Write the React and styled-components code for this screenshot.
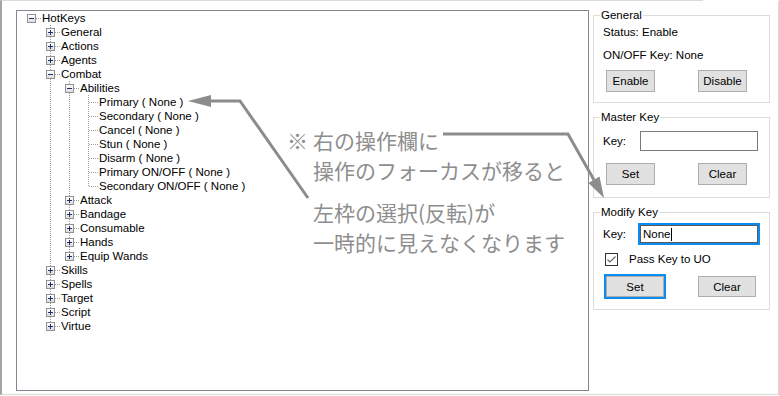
import React from 'react';
import styled, { createGlobalStyle } from 'styled-components';

const GlobalStyle = createGlobalStyle`
  html, body {
    margin: 0;
    padding: 0;
    background: #fff;
  }
  body {
    font-family: "Liberation Sans", Arial, sans-serif;
    font-size: 11.5px;
    color: #000;
  }
`;

const INDENT = 19;
const ROW = 14;
const DOT = 'repeating-linear-gradient(to bottom, #a0a0a0 0 1px, transparent 1px 2px)';
const HDOT = 'repeating-linear-gradient(to right, #a0a0a0 0 1px, transparent 1px 2px)';

const tree = [
  {
    label: 'HotKeys', open: true, children: [
      { label: 'General', closed: true },
      { label: 'Actions', closed: true },
      { label: 'Agents', closed: true },
      {
        label: 'Combat', open: true, children: [
          {
            label: 'Abilities', open: true, children: [
              { label: 'Primary ( None )' },
              { label: 'Secondary ( None )' },
              { label: 'Cancel ( None )' },
              { label: 'Stun ( None )' },
              { label: 'Disarm ( None )' },
              { label: 'Primary ON/OFF ( None )' },
              { label: 'Secondary ON/OFF ( None )' },
            ]
          },
          { label: 'Attack', closed: true },
          { label: 'Bandage', closed: true },
          { label: 'Consumable', closed: true },
          { label: 'Hands', closed: true },
          { label: 'Equip Wands', closed: true },
        ]
      },
      { label: 'Skills', closed: true },
      { label: 'Spells', closed: true },
      { label: 'Target', closed: true },
      { label: 'Script', closed: true },
      { label: 'Virtue', closed: true },
    ]
  }
];

const flatten = (nodes, depth = 0, guides = [], out = []) => {
  nodes.forEach((n, i) => {
    const isLast = i === nodes.length - 1;
    const isRootFirst = depth === 0 && i === 0;
    out.push({
      label: n.label,
      depth,
      guides,
      up: !isRootFirst,
      down: !isLast,
      expander: n.open ? 'minus' : n.closed ? 'plus' : null,
    });
    if (n.open && n.children) flatten(n.children, depth + 1, [...guides, !isLast], out);
  });
  return out;
};

const Frame = styled.div`
  position: relative;
  box-sizing: border-box;
  width: 779px;
  height: 395px;
  border-left: 2px solid #a3a3a3;
  border-top: 1px solid #dadada;
  border-right: 1px solid #dadada;
  border-bottom: 1px solid #dadada;
  padding: 9px 0 0 14px;
  display: flex;
  align-items: flex-start;

  &::before {
    content: '';
    position: absolute;
    top: -1px;
    left: 701px;
    width: 76px;
    height: 1px;
    background: #fff;
  }
`;

const TreeBox = styled.div`
  box-sizing: border-box;
  width: 573px;
  height: 381px;
  border: 1px solid #828790;
  background: #fff;
  padding-left: 5px;
`;

const Row = styled.div`
  display: flex;
  height: ${ROW}px;
  align-items: center;
`;

const Guide = styled.div`
  position: relative;
  width: ${INDENT}px;
  height: ${ROW}px;
  flex: none;
  &::before {
    content: '';
    display: ${p => (p.$line ? 'block' : 'none')};
    position: absolute;
    left: 9px;
    top: 0;
    bottom: 0;
    width: 1px;
    background: ${DOT};
  }
`;

const Connector = styled.div`
  position: relative;
  width: ${INDENT}px;
  height: ${ROW}px;
  flex: none;
  &::before {
    content: '';
    display: ${p => (p.$up || p.$down ? 'block' : 'none')};
    position: absolute;
    left: 9px;
    top: ${p => (p.$up ? 0 : 7)}px;
    bottom: ${p => (p.$down ? 0 : 7)}px;
    width: 1px;
    background: ${DOT};
  }
  &::after {
    content: '';
    position: absolute;
    left: 10px;
    right: 0;
    top: 7px;
    height: 1px;
    background: ${HDOT};
  }
`;

const Expander = styled.span`
  position: absolute;
  z-index: 1;
  left: 5px;
  top: 3px;
  width: 9px;
  height: 9px;
  box-sizing: border-box;
  border: 1px solid #919191;
  background: linear-gradient(#fff, #dcdcdc);

  &::before, &::after {
    content: '';
    position: absolute;
    background: #1d2f6b;
  }
  &::before {
    left: 1px;
    top: 3px;
    width: 5px;
    height: 1px;
  }
  &::after {
    display: ${p => (p.$kind === 'plus' ? 'block' : 'none')};
    left: 3px;
    top: 1px;
    width: 1px;
    height: 5px;
  }
`;

const Label = styled.span`
  padding-left: 1px;
  line-height: ${ROW}px;
  white-space: pre;
`;

const TreeView = () => {
  const rows = flatten(tree);
  return (
    <TreeBox>
      {rows.map((r, i) => (
        <Row key={i}>
          {r.guides.map((g, j) => <Guide key={j} $line={g} />)}
          <Connector $up={r.up} $down={r.down}>
            {r.expander && <Expander $kind={r.expander} />}
          </Connector>
          <Label>{r.label}</Label>
        </Row>
      ))}
    </TreeBox>
  );
};

const Panel = styled.div`
  width: 177px;
  margin: -2px 0 0 4px;
  display: flex;
  flex-direction: column;
  gap: 7px;
`;

const Group = styled.fieldset`
  margin: 0;
  min-width: 0;
  border: 1px solid #dcdcdc;
  padding: ${p => p.$pad || '3px 8px 10px 9px'};
  display: flex;
  flex-direction: column;
`;

const Legend = styled.legend`
  padding: 0 1px;
  margin-left: -3px;
  line-height: 14px;
`;

const Text = styled.div`
  line-height: 14px;
  margin-top: ${p => p.$mt || 0}px;
`;

const ButtonRow = styled.div`
  display: flex;
  justify-content: space-between;
  margin: ${p => p.$mt || 0}px ${p => p.$mr || 14}px 0 ${p => p.$ml || 3}px;
`;

const Button = styled.button`
  box-sizing: border-box;
  width: ${p => p.$w || 49}px;
  height: ${p => p.$h || 22}px;
  padding: 0;
  background: #e1e1e1;
  border: 1px solid #adadad;
  border-radius: 0;
  font-family: inherit;
  font-size: 11.5px;
  color: #000;
  outline: ${p => (p.$focus ? '2px solid #0a8cf0' : 'none')};
`;

const KeyRow = styled.div`
  display: flex;
  align-items: center;
  margin-top: ${p => p.$mt || 0}px;
`;

const KeyLabel = styled.span`
  width: 37px;
  line-height: 14px;
`;

const KeyInput = styled.div`
  box-sizing: border-box;
  width: 118px;
  height: ${p => p.$h || 20}px;
  border: 1px solid ${p => (p.$focus ? '#5a5a5a' : '#7a7a7a')};
  outline: ${p => (p.$focus ? '2px solid #0a8cf0' : 'none')};
  padding: 2px 2px;
  line-height: 14px;
  display: flex;
  align-items: center;
`;

const Caret = styled.span`
  display: inline-block;
  width: 1px;
  height: 13px;
  background: #000;
`;

const CheckRow = styled.div`
  display: flex;
  align-items: center;
  gap: 11px;
  margin: 9px 0 0 2px;
  line-height: 14px;
`;

const CheckBox = styled.span`
  box-sizing: border-box;
  width: 13px;
  height: 13px;
  border: 1px solid #333;
  background: #fff;
  display: flex;
  align-items: center;
  justify-content: center;
  margin-top: 1px;
`;

const Note = styled.div`
  position: absolute;
  left: 285px;
  top: 124px;
  font-family: "Noto Sans CJK JP", sans-serif;
  font-size: 21px;
  line-height: 30px;
  color: #8e8e8e;
  white-space: nowrap;
  pointer-events: none;
`;

const NoteLine = styled.div`
  padding-left: 26px;
  margin-top: ${p => p.$mt || 0}px;
`;

const Mark = styled.span`
  display: inline-block;
  width: 26px;
  margin-left: -26px;
`;

const Arrows = styled.svg`
  position: absolute;
  left: -2px;
  top: -1px;
  pointer-events: none;
`;

const Annotation = () => (
  <>
    <Arrows width="779" height="396" viewBox="0 0 779 396">
      <g stroke="#8c8c8c" strokeWidth="3" fill="none" strokeLinejoin="miter">
        <polyline points="308,198 240,101 208,101" />
        <polyline points="443,134 568,134 594,180" />
      </g>
      <g fill="#8c8c8c">
        <polygon points="188,101 211,95 211,107" />
        <polygon points="604,198 588.5,183 599.5,176.5" />
      </g>
    </Arrows>
    <Note>
      <NoteLine><Mark>※</Mark>右の操作欄に</NoteLine>
      <NoteLine>操作のフォーカスが移ると</NoteLine>
      <NoteLine $mt={12}>左枠の選択(反転)が</NoteLine>
      <NoteLine>一時的に見えなくなります</NoteLine>
    </Note>
  </>
);

const SidePanel = () => (
  <Panel>
    <Group>
      <Legend>General</Legend>
      <Text>Status: Enable</Text>
      <Text $mt={9}>ON/OFF Key: None</Text>
      <ButtonRow $mt={8}>
        <Button>Enable</Button>
        <Button>Disable</Button>
      </ButtonRow>
    </Group>

    <Group $pad="7px 8px 12px 9px">
      <Legend>Master Key</Legend>
      <KeyRow>
        <KeyLabel>Key:</KeyLabel>
        <KeyInput />
      </KeyRow>
      <ButtonRow $mt={12}>
        <Button>Set</Button>
        <Button>Clear</Button>
      </ButtonRow>
    </Group>

    <Group $pad="6px 8px 12px 9px">
      <Legend>Modify Key</Legend>
      <KeyRow>
        <KeyLabel>Key:</KeyLabel>
        <KeyInput $focus $h={18}>None<Caret /></KeyInput>
      </KeyRow>
      <CheckRow>
        <CheckBox>
          <svg width="11" height="11" viewBox="0 0 11 11">
            <polyline points="1.5,5.5 4,8 9.5,2.5" fill="none" stroke="#6a6a6a" strokeWidth="1.2" />
          </svg>
        </CheckBox>
        <span>Pass Key to UO</span>
      </CheckRow>
      <ButtonRow $mt={10} $ml={3} $mr={5}>
        <Button $w={58} $h={21} $focus>Set</Button>
        <Button $w={58} $h={21}>Clear</Button>
      </ButtonRow>
    </Group>
  </Panel>
);

export default function App() {
  return (
    <>
      <GlobalStyle />
      <Frame>
        <TreeView />
        <SidePanel />
        <Annotation />
      </Frame>
    </>
  );
}
